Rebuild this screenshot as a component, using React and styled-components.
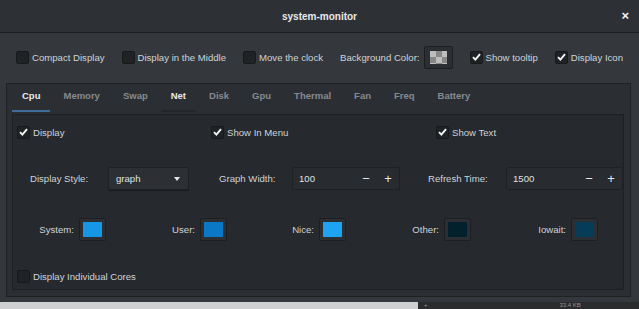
import React from "react";
import styled, { createGlobalStyle } from "styled-components";

const GlobalStyle = createGlobalStyle`
  html, body {
    margin: 0;
    padding: 0;
    background: #2a2c2e;
  }
  body {
    font-family: "Liberation Sans", Arial, sans-serif;
    font-size: 9.6px;
    color: #cfd3d7;
    overflow: hidden;
  }
`;

const Screen = styled.div`
  width: 639px;
  height: 309px;
  display: flex;
  flex-direction: column;
  overflow: hidden;
`;

const Window = styled.div`
  height: 302px;
  flex: none;
  display: flex;
  flex-direction: column;
  background: #34383c;
`;

const TitleBar = styled.div`
  height: 32px;
  flex: none;
  display: flex;
  align-items: center;
  justify-content: center;
  position: relative;
  background: #2d3135;
  border-bottom: 1px solid #1c1f22;
  color: #e8e9ea;
  font-weight: bold;
  font-size: 10px;
`;

const CloseButton = styled.span`
  position: absolute;
  right: 10px;
  top: 9px;
  font-size: 13px;
  line-height: 13px;
  color: #f2f2f2;
`;

const Body = styled.div`
  flex: 1;
  display: flex;
  flex-direction: column;
  padding: 0 8px 5px 6px;
  min-height: 0;
`;

const OptionsRow = styled.div`
  height: 48px;
  flex: none;
  display: flex;
  align-items: center;
  gap: 17px;
  padding: 0 0 2px 10px;

  & > * {
    flex: none;
  }
`;

const CheckItem = styled.label`
  display: flex;
  align-items: center;
  gap: 3px;
  white-space: nowrap;
  color: #cfd3d7;
`;

const Box = styled.span`
  width: 11px;
  height: 11px;
  border-radius: 2px;
  background: #202326;
  border: 1px solid #17191b;
  display: flex;
  align-items: center;
  justify-content: center;
  flex: none;
`;

const Label = styled.span`
  white-space: nowrap;
  color: #cfd3d7;
`;

const BgColorButton = styled.span`
  width: 29px;
  height: 23px;
  box-sizing: border-box;
  padding: 4px 5px;
  margin-left: -13px;
  background: #2b2e32;
  border: 1px solid #1d2023;
  border-radius: 2px;
  display: flex;
`;

const Checker = styled.span`
  flex: 1;
  background-color: #bdbdbd;
  background-image:
    linear-gradient(45deg, #878787 25%, transparent 25%, transparent 75%, #878787 75%),
    linear-gradient(45deg, #878787 25%, transparent 25%, transparent 75%, #878787 75%);
  background-size: 12px 12px;
  background-position: 0 0, 6px 6px;
`;

const Notebook = styled.div`
  flex: 1;
  display: flex;
  flex-direction: column;
  background: #2b2f33;
  border: 1px solid #1f2225;
  min-height: 0;
`;

const TabStrip = styled.div`
  height: 30px;
  flex: none;
  display: flex;
  align-items: stretch;
  gap: 3px;
  padding-left: 5px;
`;

const Tab = styled.span`
  position: relative;
  display: flex;
  align-items: center;
  padding: 0 10px 8px;
  font-weight: bold;
  font-size: 9.5px;
  color: ${(p) => (p.$active || p.$hover ? "#e9eaeb" : "#858a8f")};

  &::after {
    content: "";
    position: absolute;
    left: 0;
    right: 0;
    bottom: 2px;
    height: 2px;
    background: ${(p) => (p.$active ? "#3f6d9b" : p.$hover ? "#24272a" : "transparent")};
  }
`;

const Panel = styled.div`
  flex: 1;
  margin: 0 6px 6px 5px;
  background: #26292d;
  border: 1px solid #1e2124;
  display: flex;
  flex-direction: column;
  padding: 9px 0 0 0;
`;

const CheckRow = styled.div`
  display: grid;
  grid-template-columns: 194px 225px 1fr;
  height: 16px;
  align-items: center;
  padding-left: 4px;
`;

const FieldRow = styled.div`
  display: flex;
  align-items: center;
  height: 23px;
  margin-top: 27px;
  padding-left: 17px;
`;

const FieldLabel = styled.span`
  width: ${(p) => p.$w}px;
  flex: none;
  white-space: nowrap;
  color: #cfd3d7;
`;

const Combo = styled.span`
  width: 81px;
  height: 23px;
  box-sizing: border-box;
  display: flex;
  align-items: center;
  justify-content: space-between;
  padding: 0 8px 0 7px;
  margin-right: 30px;
  background: #2c3034;
  border: 1px solid #1f2225;
  border-radius: 2px;
  box-shadow: 0 1px 1px rgba(0, 0, 0, 0.35);
  color: #dfe2e5;
`;

const Arrow = styled.span`
  width: 0;
  height: 0;
  border-left: 3.5px solid transparent;
  border-right: 3.5px solid transparent;
  border-top: 4px solid #e6e6e6;
`;

const Spin = styled.span`
  width: ${(p) => p.$w}px;
  height: 23px;
  box-sizing: border-box;
  display: flex;
  align-items: center;
  margin-right: ${(p) => p.$mr || 0}px;
  background: #282b2f;
  border: 1px solid #1f2225;
  border-radius: 2px;
  color: #dfe2e5;
`;

const SpinValue = styled.span`
  flex: 1;
  padding-left: 6px;
`;

const SpinButton = styled.span`
  width: 22px;
  text-align: center;
  font-size: 13px;
  line-height: 13px;
  color: #e6e6e6;
`;

const ColorRow = styled.div`
  display: grid;
  grid-template-columns: 93px 121px 119px 125px 127px;
  height: 23px;
  margin-top: 28px;
`;

const ColorCell = styled.div`
  display: flex;
  align-items: center;
  justify-content: flex-end;
  gap: 5px;
`;

const Swatch = styled.span`
  width: 27px;
  height: 23px;
  box-sizing: border-box;
  padding: 3px;
  background: #2b2e32;
  border: 1px solid #1d2023;
  border-radius: 2px;
  display: flex;

  &::before {
    content: "";
    flex: 1;
    background: ${(p) => p.$color};
  }
`;

const LastRow = styled(CheckRow)`
  grid-template-columns: 1fr;
  margin-top: 27px;
`;

const Desktop = styled.div`
  flex: 1;
  display: flex;
  overflow: hidden;
`;

const DesktopLight = styled.div`
  width: 418px;
  background: #cfd0d1;
`;

const DesktopDark = styled.div`
  flex: 1;
  background: #2a2c2e;
  color: #8f9396;
  font-size: 6px;
  line-height: 7px;
  display: flex;
  gap: 132px;
  padding-left: 6px;
`;

function Check({ checked, children }) {
  return (
    <CheckItem>
      <Box>
        {checked && (
          <svg width="9" height="8" viewBox="0 0 9 8">
            <path d="M1 4.2 L3.4 6.6 L8 1.2" fill="none" stroke="#f4f4f4" strokeWidth="1.9" />
          </svg>
        )}
      </Box>
      {children}
    </CheckItem>
  );
}

const tabs = ["Cpu", "Memory", "Swap", "Net", "Disk", "Gpu", "Thermal", "Fan", "Freq", "Battery"];

const colors = [
  ["System:", "#1597e6"],
  ["User:", "#0a78c6"],
  ["Nice:", "#1ea3f2"],
  ["Other:", "#03202d"],
  ["Iowait:", "#063c58"],
];

export default function App() {
  return (
    <Screen>
      <GlobalStyle />
      <Window>
        <TitleBar>
          system-monitor
          <CloseButton>×</CloseButton>
        </TitleBar>
        <Body>
          <OptionsRow>
            <Check>Compact Display</Check>
            <Check>Display in the Middle</Check>
            <Check>Move the clock</Check>
            <Label>Background Color:</Label>
            <BgColorButton>
              <Checker />
            </BgColorButton>
            <Check checked>Show tooltip</Check>
            <Check checked>Display Icon</Check>
          </OptionsRow>
          <Notebook>
            <TabStrip>
              {tabs.map((t) => (
                <Tab key={t} $active={t === "Cpu"} $hover={t === "Net"}>
                  {t}
                </Tab>
              ))}
            </TabStrip>
            <Panel>
              <CheckRow>
                <Check checked>Display</Check>
                <Check checked>Show In Menu</Check>
                <Check checked>Show Text</Check>
              </CheckRow>
              <FieldRow>
                <FieldLabel $w={78}>Display Style:</FieldLabel>
                <Combo>
                  graph
                  <Arrow />
                </Combo>
                <FieldLabel $w={73}>Graph Width:</FieldLabel>
                <Spin $w={108} $mr={28}>
                  <SpinValue>100</SpinValue>
                  <SpinButton>−</SpinButton>
                  <SpinButton>+</SpinButton>
                </Spin>
                <FieldLabel $w={78}>Refresh Time:</FieldLabel>
                <Spin $w={117}>
                  <SpinValue>1500</SpinValue>
                  <SpinButton>−</SpinButton>
                  <SpinButton>+</SpinButton>
                </Spin>
              </FieldRow>
              <ColorRow>
                {colors.map(([name, c]) => (
                  <ColorCell key={name}>
                    <Label>{name}</Label>
                    <Swatch $color={c} />
                  </ColorCell>
                ))}
              </ColorRow>
              <LastRow>
                <Check>Display Individual Cores</Check>
              </LastRow>
            </Panel>
          </Notebook>
        </Body>
      </Window>
      <Desktop>
        <DesktopLight />
        <DesktopDark>
          <span>+</span>
          <span>33.4 KB</span>
        </DesktopDark>
      </Desktop>
    </Screen>
  );
}
